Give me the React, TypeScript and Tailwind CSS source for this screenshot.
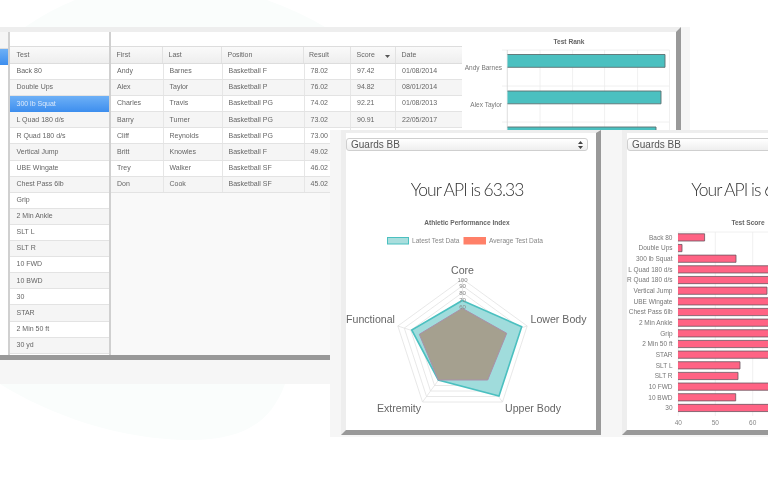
import React from 'react';

const TESTS = [
  'Back 80', 'Double Ups', '300 lb Squat', 'L Quad 180 d/s', 'R Quad 180 d/s', 'Vertical Jump',
  'UBE Wingate', 'Chest Pass 6lb', 'Grip', '2 Min Ankle', 'SLT L', 'SLT R',
  '10 FWD', '10 BWD', '30', 'STAR', '2 Min 50 ft', '30 yd',
];

// last rows run under the radar window, so their score and date stay empty
const ATHLETES = [
  ['Andy', 'Barnes', 'Basketball F', '78.02', '97.42', '01/08/2014'],
  ['Alex', 'Taylor', 'Basketball P', '76.02', '94.82', '08/01/2014'],
  ['Charles', 'Travis', 'Basketball PG', '74.02', '92.21', '01/08/2013'],
  ['Barry', 'Turner', 'Basketball PG', '73.02', '90.91', '22/05/2017'],
  ['Cliff', 'Reynolds', 'Basketball PG', '73.00', '', ''],
  ['Britt', 'Knowles', 'Basketball F', '49.02', '', ''],
  ['Trey', 'Walker', 'Basketball SF', '46.02', '', ''],
  ['Don', 'Cook', 'Basketball SF', '45.02', '', ''],
];

const HEADERS = ['First', 'Last', 'Position', 'Result', 'Score', 'Date'];

const SCORES: [string, number][] = [
  ['Back 80', 704.6], ['Double Ups', 682], ['300 lb Squat', 736], ['L Quad 180 d/s', 800],
  ['R Quad 180 d/s', 800], ['Vertical Jump', 767], ['UBE Wingate', 800], ['Chest Pass 6lb', 800],
  ['2 Min Ankle', 800], ['Grip', 800], ['2 Min 50 ft', 800], ['STAR', 800],
  ['SLT L', 740], ['SLT R', 738], ['10 FWD', 800], ['10 BWD', 735.7], ['30', 800],
];

const RADAR_LABELS: [string, number, number][] = [
  ['Core', 462.5, 274],
  ['Lower Body', 558.5, 323],
  ['Upper Body', 533, 412],
  ['Extremity', 399, 412],
  ['Functional', 370.5, 323],
];

const ringPoints = (value: number) => {
  const r = value * 0.68;
  return [0, 1, 2, 3, 4]
    .map((i) => {
      const a = (i * 72 * Math.PI) / 180;
      return `${462.5 + r * Math.sin(a)},${347 - r * Math.cos(a)}`;
    })
    .join(' ');
};

// bar with an outline on top, right and bottom only
const barPath = (x: number, y: number, end: number, h: number) => `M${x} ${y}H${end}V${y + h}H${x}`;

const Row = ({ index, children }: { index: number; children: React.ReactNode }) => (
  <div className={`h-[16.1px] border-b border-[#e3e3e3] ${index % 2 ? 'bg-[#f5f5f5]' : 'bg-white'}`}>
    {children}
  </div>
);

const GuardsSelect = ({ width }: { width: string }) => (
  <div className={`${width} mt-[5px] flex h-[13px] items-center justify-between rounded-[3px] border border-[#cfcfcf] bg-gradient-to-b from-white to-[#efefef] pl-[4px] pr-[4px] text-[10px] text-[#555]`}>
    <span>Guards BB</span>
    <svg width="5" height="8" viewBox="0 0 5 8" className="fill-[#444]">
      <path d="M2.5 0 5 3H0zM2.5 8 0 5h5z" />
    </svg>
  </div>
);

const ApiTitle = ({ inset }: { inset: string }) => (
  <div className={`${inset} flex h-[64px] items-center justify-center pt-[14px] font-['Lato',sans-serif] text-[17.5px] font-light tracking-[-1px] text-[#333]`}>
    Your API is 63.33
  </div>
);

const RadarChart = () => (
  <svg width="250" height="210" viewBox="346 215 250 210" className="block font-['Liberation_Sans',sans-serif]">
    <text x="467" y="225" textAnchor="middle" fontSize="6.6" fontWeight="700" fill="#666">
      Athletic Performance Index
    </text>
    <rect x="387.5" y="237.5" width="21" height="6.5" fill="#a9dedd" stroke="#4bc0c0" />
    <text x="412" y="243" fontSize="6.6" fill="#888">Latest Test Data</text>
    <rect x="463.5" y="237" width="22.5" height="7.5" fill="#ff8068" />
    <text x="489" y="243" fontSize="6.6" fill="#888">Average Test Data</text>

    {[60, 70, 80, 90, 100].map((v) => (
      <polygon key={v} points={ringPoints(v)} fill="none" stroke="#e2e2e2" strokeWidth="0.8" />
    ))}
    {[0, 1, 2, 3, 4].map((i) => {
      const a = (i * 72 * Math.PI) / 180;
      return (
        <line key={i} x1="462.5" y1="347" x2={462.5 + 68 * Math.sin(a)} y2={347 - 68 * Math.cos(a)} stroke="#e2e2e2" strokeWidth="0.8" />
      );
    })}
    <polygon
      points="462.3,300.5 521.7,326.7 499,396 438.3,380 411.7,330"
      fill="#a0dcdc"
      stroke="#4bc0c0"
      strokeWidth="1.6"
    />
    <polygon
      points="462.3,308.3 506.7,333.3 487.7,380 438.3,380 419.3,334.3"
      fill="#a5a08f"
      stroke="#a890ab"
      strokeWidth="1"
    />
    {[100, 90, 80, 70, 60].map((v, i) => (
      <text key={v} x="462.5" y={281.5 + i * 6.8} textAnchor="middle" fontSize="6" fill="#888">
        {v}
      </text>
    ))}
    {RADAR_LABELS.map(([label, x, y]) => (
      <text key={label} x={x} y={y} textAnchor="middle" fontSize="10.6" fill="#666">
        {label}
      </text>
    ))}
  </svg>
);

const ScoreChart = () => (
  <svg width="241" height="215" viewBox="627 215 241 215" className="block font-['Liberation_Sans',sans-serif]">
    <text x="748" y="225" textAnchor="middle" fontSize="6.6" fontWeight="700" fill="#666">
      Test Score
    </text>
    {[678.3, 715.3, 752.7, 790].map((x) => (
      <line key={x} x1={x} y1="232" x2={x} y2="416" stroke="#ececec" strokeWidth="0.8" />
    ))}
    <line x1="678" y1="232" x2="868" y2="232" stroke="#ececec" strokeWidth="0.8" />
    {SCORES.map(([label, end], i) => {
      const y = 237.4 + i * 10.66;
      return (
        <g key={label}>
          <text x="672.5" y={y + 2.3} textAnchor="end" fontSize="6.5" fill="#777">
            {label}
          </text>
          <path d={barPath(678, y - 3.6, end, 7.2)} fill="#ff6384" stroke="#6b5560" strokeWidth="0.8" />
        </g>
      );
    })}
    {[['40', 678.3], ['50', 715.3], ['60', 752.7]].map(([label, x]) => (
      <text key={label} x={x} y="425" textAnchor="middle" fontSize="6.5" fill="#888">
        {label}
      </text>
    ))}
  </svg>
);

const RankChart = () => (
  <svg width="214" height="323" viewBox="462 32 214 323" className="block font-['Liberation_Sans',sans-serif]">
    <text x="569" y="43.5" textAnchor="middle" fontSize="6.6" fontWeight="700" fill="#666">
      Test Rank
    </text>
    {[540, 572.6, 604.6, 637.6, 669.5].map((x) => (
      <line key={x} x1={x} y1="50" x2={x} y2="355" stroke="#ececec" strokeWidth="0.8" />
    ))}
    {[50, 86, 122].map((y) => (
      <line key={y} x1="502" y1={y} x2="669.5" y2={y} stroke="#ececec" strokeWidth="0.8" />
    ))}
    <line x1="507.3" y1="50" x2="507.3" y2="355" stroke="#d5d5d5" strokeWidth="0.8" />
    {[[54.5, 665], [91, 661], [127, 656]].map(([y, end]) => (
      <path key={y} d={barPath(507.5, y, end, 12.8)} fill="#4bc0c0" stroke="#5c6f70" strokeWidth="0.9" />
    ))}
    <text x="502" y="70.3" textAnchor="end" fontSize="6.5" fill="#777">Andy Barnes</text>
    <text x="502" y="106.5" textAnchor="end" fontSize="6.5" fill="#777">Alex Taylor</text>
  </svg>
);

const App: React.FC = () => {
  return (
    <div className="relative h-[480px] w-[768px] overflow-hidden bg-white font-['Liberation_Sans',sans-serif] text-[7px] text-[#666] blur-[0.35px]">
      {/* Faint backdrop shape */}
      <svg width="768" height="480" className="absolute left-0 top-0">
        <path d="M25 27Q50 10 75 0L267 0Q300 12 325 27L285 384C270 425 240 440 190 440C120 440 50 415 0 384Z" fill="#fafdfc" />
      </svg>

      {/* Table window */}
      <div className="absolute left-0 top-[27px] h-[357px] w-[690px] bg-[#f6f6f6]">
        <div className="box-border flex h-[333px] w-[681px] border-b-[5px] border-r-[5px] border-t-[5px] border-b-[#999] border-r-[#999] border-t-[#eee] bg-white">
          {/* Left sliver of the group list */}
          <div className="w-[10px] shrink-0 border-r-2 border-[#d0d0d0]">
            <div className="h-[17px] border-b border-[#ddd] bg-[#f5f5f5]" />
            <div className="h-[16px] bg-gradient-to-b from-[#6db0f6] to-[#3d8eee]" />
          </div>

          {/* Test list */}
          <div className="w-[101px] shrink-0 border-r-2 border-[#d0d0d0] pt-[14px]">
            <div className="flex h-[18px] items-center border-b border-t border-[#ddd] bg-gradient-to-b from-[#fafafa] to-[#eeeeee] pl-[6.5px]">
              Test
            </div>
            {TESTS.map((test, i) =>
              i === 2 ? (
                <div key={test} className="flex h-[16.1px] items-center bg-gradient-to-b from-[#6db0f6] to-[#3d8eee] pl-[6.5px] text-[#dce9fa]">
                  {test}
                </div>
              ) : (
                <Row key={test} index={i}>
                  <div className="flex h-full items-center pl-[6.5px]">{test}</div>
                </Row>
              ),
            )}
          </div>

          {/* Results table */}
          <div className="flex w-[351px] shrink-0 flex-col pt-[14px]">
            <div className="grid h-[18px] grid-cols-[52px_59px_81.5px_47.5px_45px_66px] border-b border-t border-[#ddd] bg-gradient-to-b from-[#fafafa] to-[#eeeeee]">
              {HEADERS.map((h) => (
                <div key={h} className="flex items-center justify-between border-r border-[#e2e2e2] pl-[5.5px] pr-[5px] last:border-r-0">
                  <span>{h}</span>
                  {h === 'Score' && (
                    <svg width="5" height="3" viewBox="0 0 5 3" className="mt-[2px] fill-[#555]">
                      <path d="M0 0h5L2.5 3z" />
                    </svg>
                  )}
                </div>
              ))}
            </div>
            {ATHLETES.map((row, i) => (
              <Row key={row[0]} index={i}>
                <div className="grid h-full grid-cols-[52.5px_59px_82px_46.5px_45px_66px]">
                  {row.map((cell, j) => (
                    <div key={j} className="flex items-center border-r border-[#e6e6e6] pl-[6px] last:border-r-0">
                      {cell}
                    </div>
                  ))}
                </div>
              </Row>
            ))}
            <div className="flex-1 bg-[#f9f9f9]" />
          </div>

          <RankChart />
        </div>
      </div>

      {/* API radar window */}
      <div className="absolute left-[330px] top-[130px] h-[307px] w-[281px] bg-[#f6f6f6] pl-[11px] pr-[10px]">
        <div className="box-border h-[305px] border-b-[5px] border-l-[5px] border-r-[5px] border-t-[3px] border-b-[#999] border-l-[#eee] border-r-[#999] border-t-[#eee] bg-white">
          <GuardsSelect width="w-[242px]" />
          <ApiTitle inset="pr-[8px]" />
          <RadarChart />
        </div>
      </div>

      {/* API score window */}
      <div className="absolute left-[611px] top-[130px] h-[307px] w-[262px] bg-[#f6f6f6] pl-[11px]">
        <div className="box-border h-[305px] border-b-[5px] border-l-[5px] border-r-[5px] border-t-[3px] border-b-[#999] border-l-[#eee] border-r-[#999] border-t-[#eee] bg-white">
          <GuardsSelect width="w-[241px]" />
          <ApiTitle inset="pr-0" />
          <ScoreChart />
        </div>
      </div>
    </div>
  );
};

export default App;
